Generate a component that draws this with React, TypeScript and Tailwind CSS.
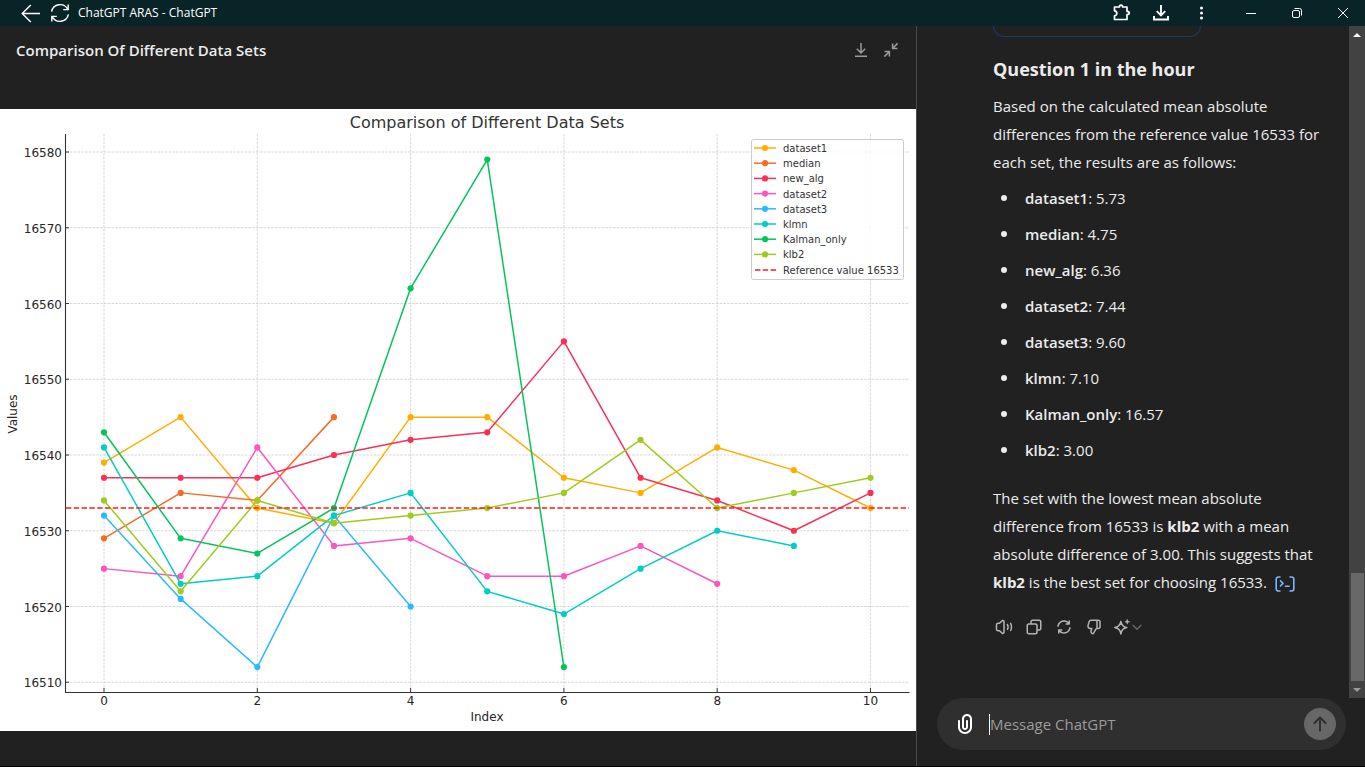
import type { ReactNode } from "react";

type Series = { name: string; color: string; values: number[] };

const SERIES: Series[] = [
  { name: "dataset1", color: "#ffae00", values: [16539, 16545, 16533, 16531, 16545, 16545, 16537, 16535, 16541, 16538, 16533] },
  { name: "median", color: "#fa6a24", values: [16529, 16535, 16534, 16545] },
  { name: "new_alg", color: "#f93056", values: [16537, 16537, 16537, 16540, 16542, 16543, 16555, 16537, 16534, 16530, 16535] },
  { name: "dataset2", color: "#fb55c0", values: [16525, 16524, 16541, 16528, 16529, 16524, 16524, 16528, 16523] },
  { name: "dataset3", color: "#28bbff", values: [16532, 16521, 16512, 16532, 16520] },
  { name: "klmn", color: "#00cec4", values: [16541, 16523, 16524, 16532, 16535, 16522, 16519, 16525, 16530, 16528] },
  { name: "Kalman_only", color: "#04c45c", values: [16543, 16529, 16527, 16533, 16562, 16579, 16512] },
  { name: "klb2", color: "#9fcc1c", values: [16534, 16522, 16534, 16531, 16532, 16533, 16535, 16542, 16533, 16535, 16537] },
];

const RESULTS: [string, string][] = [
  ["dataset1", "5.73"],
  ["median", "4.75"],
  ["new_alg", "6.36"],
  ["dataset2", "7.44"],
  ["dataset3", "9.60"],
  ["klmn", "7.10"],
  ["Kalman_only", "16.57"],
  ["klb2", "3.00"],
];

const X_TICKS = [0, 2, 4, 6, 8, 10];
const Y_TICKS = [16510, 16520, 16530, 16540, 16550, 16560, 16570, 16580];

const px = (i: number) => 104 + i * 76.65;
const py = (v: number) => 43 + (16580 - v) * 7.575;

function Chart() {
  return (
    <svg
      viewBox="0 0 916 622"
      role="img"
      aria-label="Comparison of Different Data Sets"
      className="block w-full bg-white font-['DejaVu_Sans',sans-serif]"
    >
      <g stroke="#b0b0b0" strokeWidth="0.8" strokeDasharray="2.6 1.2" opacity="0.6">
        {X_TICKS.map((t) => (
          <line key={t} x1={px(t)} x2={px(t)} y1="25" y2="583" />
        ))}
        {Y_TICKS.map((t) => (
          <line key={t} x1="66" x2="909" y1={py(t)} y2={py(t)} />
        ))}
      </g>
      <g stroke="#262626" strokeWidth="0.9">
        {X_TICKS.map((t) => (
          <line key={t} x1={px(t)} x2={px(t)} y1="583" y2="579" />
        ))}
        {Y_TICKS.map((t) => (
          <line key={t} x1="66" x2="69" y1={py(t)} y2={py(t)} />
        ))}
      </g>
      {SERIES.map((s) => (
        <g key={s.name} fill={s.color}>
          <polyline
            points={s.values.map((v, i) => `${px(i)},${py(v)}`).join(" ")}
            fill="none"
            stroke={s.color}
            strokeWidth="1.5"
            strokeLinejoin="round"
          />
          {s.values.map((v, i) => (
            <circle key={i} cx={px(i)} cy={py(v)} r="3.1" />
          ))}
        </g>
      ))}
      <line x1="66" x2="909" y1={py(16533)} y2={py(16533)} stroke="#ff1c1c" strokeWidth="1.6" strokeDasharray="5.4 2.4" />
      <path d="M65.5 25V583.5H909.5" fill="none" stroke="#333333" strokeWidth="1.1" />

      <g fill="#262626" fontSize="12">
        {Y_TICKS.map((t) => (
          <text key={t} x="62" y={py(t) + 5} textAnchor="end">
            {t}
          </text>
        ))}
        {X_TICKS.map((t) => (
          <text key={t} x={px(t)} y="596" textAnchor="middle">
            {t}
          </text>
        ))}
        <text x="487" y="612" textAnchor="middle">
          Index
        </text>
        <text transform="translate(17 305) rotate(-90)" textAnchor="middle">
          Values
        </text>
      </g>
      <text x="487" y="19" textAnchor="middle" fontSize="16" fill="#333333">
        Comparison of Different Data Sets
      </text>

      <rect x="751.5" y="30.5" width="152" height="140" rx="2" fill="#ffffff" fillOpacity="0.8" stroke="#cccccc" />
      {SERIES.map((s, i) => (
        <g key={s.name}>
          <line x1="754" x2="776" y1={39 + i * 15.2} y2={39 + i * 15.2} stroke={s.color} strokeWidth="1.5" />
          <circle cx="765" cy={39 + i * 15.2} r="3.1" fill={s.color} />
          <text x="783" y={43 + i * 15.2} fontSize="10" fill="#333333">
            {s.name}
          </text>
        </g>
      ))}
      <line x1="755" x2="776" y1="161" y2="161" stroke="#ff1c1c" strokeWidth="1.6" strokeDasharray="5.4 2.4" />
      <text x="783" y="165" fontSize="10" fill="#333333">
        Reference value 16533
      </text>
    </svg>
  );
}

function IconButton({ label, className, children }: { label: string; className: string; children: ReactNode }) {
  return (
    <button type="button" aria-label={label} className={`flex shrink-0 items-center justify-center ${className}`}>
      {children}
    </button>
  );
}

function TitleBar() {
  return (
    <header className="flex h-[26px] shrink-0 items-center bg-[#092427] text-white">
      <IconButton label="Back" className="ml-4 h-6 w-7">
        <svg width="20" height="20" viewBox="0 0 20 20" fill="none" stroke="currentColor" strokeWidth="1.4">
          <path d="M20 10.5H2.6M10.8 2L2.2 10.5L10.8 19" />
        </svg>
      </IconButton>
      <IconButton label="Reload" className="ml-1 h-6 w-6">
        <svg width="20" height="20" viewBox="0 0 20 20" fill="none" stroke="currentColor" strokeWidth="1.4">
          <path d="M1.6 8.6A8.6 8.6 0 0 1 17.6 6.2M18.2 1.6V6.6H13.2M18.4 11.4A8.6 8.6 0 0 1 2.4 13.8M1.8 18.4V13.4H6.8" />
        </svg>
      </IconButton>
      <h1 className="ml-[6px] flex-1 text-[12px] leading-4">ChatGPT ARAS - ChatGPT</h1>
      <IconButton label="Extensions" className="h-6 w-10">
        <svg width="18" height="18" viewBox="0 0 18 18" fill="none" stroke="currentColor" strokeWidth="1.7" strokeLinejoin="round">
          <path d="M1.5 3H6.4C6.4 0.6 9.6 0.6 9.6 3H14V7.4C17 7.4 17 10.6 14 10.6V15.5H1.5V11.8C4.6 11.4 4.6 7.2 1.5 6.8Z" />
        </svg>
      </IconButton>
      <IconButton label="Downloads" className="h-6 w-10">
        <svg width="18" height="18" viewBox="0 0 18 18" fill="none" stroke="currentColor" strokeWidth="1.9">
          <path d="M8 1V11M3.8 7.2L8 11.4L12.2 7.2M1 12V15.5H15V12" />
        </svg>
      </IconButton>
      <IconButton label="Menu" className="h-6 w-10">
        <svg width="4" height="14" viewBox="0 0 4 14" fill="currentColor">
          <circle cx="1.5" cy="2" r="1.5" />
          <circle cx="1.5" cy="7" r="1.5" />
          <circle cx="1.5" cy="12" r="1.5" />
        </svg>
      </IconButton>
      <IconButton label="Minimize" className="ml-[6px] h-[26px] w-[46px]">
        <svg width="10" height="10" viewBox="0 0 10 10" stroke="currentColor">
          <path d="M0 5.5H10" />
        </svg>
      </IconButton>
      <IconButton label="Restore" className="h-[26px] w-[46px]">
        <svg width="10" height="10" viewBox="0 0 10 10" fill="none" stroke="currentColor">
          <rect x="0.5" y="2.5" width="7" height="7" rx="1.5" />
          <path d="M2.5 0.5H7.5A2 2 0 0 1 9.5 2.5V7.5" />
        </svg>
      </IconButton>
      <IconButton label="Close" className="-mr-px h-[26px] w-[46px]">
        <svg width="10" height="10" viewBox="0 0 10 10" stroke="currentColor">
          <path d="M0 0L10 10M10 0L0 10" />
        </svg>
      </IconButton>
    </header>
  );
}

const SPEAKER =
  "M11 4.9099C11 4.47485 10.4828 4.24734 10.1621 4.54132L6.67572 7.7372C6.49129 7.90626 6.25019 8.00005 6 8.00005H4C3.44772 8.00005 3 8.44776 3 9.00005V15C3 15.5523 3.44772 16 4 16H6C6.25019 16 6.49129 16.0938 6.67572 16.2629L10.1621 19.4588C10.4828 19.7527 11 19.5252 11 19.0902V4.9099ZM8.81069 3.06701C10.4142 1.59714 13 2.73463 13 4.9099V19.0902C13 21.2655 10.4142 22.403 8.81069 20.9331L5.61102 18H4C2.34315 18 1 16.6569 1 15V9.00005C1 7.34319 2.34315 6.00005 4 6.00005H5.61102L8.81069 3.06701ZM20.3166 6.35665C20.8019 6.09313 21.409 6.27296 21.6725 6.75833C22.5191 8.3176 22.9996 10.1042 22.9996 12.0001C22.9996 13.8507 22.5418 15.5974 21.7323 17.1302C21.4744 17.6185 20.8695 17.8054 20.3811 17.5475C19.8927 17.2896 19.7059 16.6846 19.9638 16.1962C20.6249 14.9444 20.9996 13.5175 20.9996 12.0001C20.9996 10.4458 20.6064 8.98627 19.9149 7.71262C19.6514 7.22726 19.8312 6.62017 20.3166 6.35665ZM15.7994 7.90049C16.241 7.5688 16.8679 7.65789 17.1995 8.09947C18.0156 9.18593 18.4996 10.5379 18.4996 12.0001C18.4996 13.3127 18.1094 14.5372 17.4385 15.5604C17.1357 16.0222 16.5158 16.1511 16.0539 15.8483C15.5921 15.5455 15.4632 14.9255 15.766 14.4637C16.2298 13.7564 16.4996 12.9113 16.4996 12.0001C16.4996 10.9859 16.1653 10.0526 15.6004 9.30063C15.2687 8.85905 15.3578 8.23218 15.7994 7.90049Z";
const COPY =
  "M7 5C7 3.34315 8.34315 2 10 2H19C20.6569 2 22 3.34315 22 5V14C22 15.6569 20.6569 17 19 17H17V19C17 20.6569 15.6569 22 14 22H5C3.34315 22 2 20.6569 2 19V10C2 8.34315 3.34315 7 5 7H7V5ZM9 7H14C15.6569 7 17 8.34315 17 10V15H19C19.5523 15 20 14.5523 20 14V5C20 4.44772 19.5523 4 19 4H10C9.44772 4 9 4.44772 9 5V7ZM5 9C4.44772 9 4 9.44772 4 10V19C4 19.5523 4.44772 20 5 20H14C14.5523 20 15 19.5523 15 19V10C15 9.44772 14.5523 9 14 9H5Z";
const REGENERATE =
  "M3.06957 10.8763C3.62331 6.43564 7.40967 3 12 3C14.2824 3 16.4028 3.85067 18.0118 5.25439V4C18.0118 3.44772 18.4595 3 19.0118 3C19.5641 3 20.0118 3.44772 20.0118 4V8C20.0118 8.55228 19.5641 9 19.0118 9H15C14.4477 9 14 8.55228 14 8C14 7.44772 14.4477 7 15 7H16.9571C15.6757 5.76379 13.9101 5 12 5C8.43108 5 5.48466 7.67174 5.0542 11.1237C4.98586 11.6718 4.48619 12.0607 3.93815 11.9923C3.39011 11.924 3.00123 11.4243 3.06957 10.8763ZM20.0618 12.0077C20.6099 12.076 20.9988 12.5757 20.9304 13.1237C20.3767 17.5644 16.5903 21 12 21C9.72322 21 7.60762 20.1535 5.99999 18.7559V20C5.99999 20.5523 5.55228 21 4.99999 21C4.44771 21 3.99999 20.5523 3.99999 20V16C3.99999 15.4477 4.44771 15 4.99999 15H8.99999C9.55228 15 9.99999 15.4477 9.99999 16C9.99999 16.5523 9.55228 17 8.99999 17H7.04285C8.32433 18.2362 10.0899 19 12 19C15.5689 19 18.5153 16.3283 18.9458 12.8763C19.0141 12.3282 19.5138 11.9393 20.0618 12.0077Z";
const THUMB_DOWN =
  "M11.8727 21.4961C11.6725 21.8466 11.2811 22.0423 10.8805 21.9922L10.4267 21.9355C7.95958 21.6271 6.36855 19.1665 7.09975 16.7901L7.65054 15H6.93226C4.29476 15 2.37923 12.4921 3.0732 9.94753L4.43684 4.94753C4.91145 3.20728 6.49209 2 8.29589 2H18.0045C19.6614 2 21.0045 3.34315 21.0045 5V12C21.0045 13.6569 19.6614 15 18.0045 15H16.0045C15.745 15 15.5054 15.1391 15.3766 15.3644L11.8727 21.4961ZM14.0045 4H8.29589C7.39399 4 6.60367 4.60364 6.36637 5.47376L5.00273 10.4738C4.65574 11.746 5.61351 13 6.93226 13H9.00451C9.32185 13 9.62036 13.1506 9.8089 13.4059C9.99743 13.6612 10.0536 13.9908 9.96028 14.2941L9.01131 17.3782C8.6661 18.5002 9.35608 19.6596 10.4726 19.9153L13.6401 14.3721C13.9523 13.8258 14.4376 13.4141 15.0045 13.1902V5C15.0045 4.44772 14.5568 4 14.0045 4ZM17.0045 13V5C17.0045 4.64937 16.9444 4.31278 16.8338 4H18.0045C18.5568 4 19.0045 4.44772 19.0045 5V12C19.0045 12.5523 18.5568 13 18.0045 13H17.0045Z";
const PAPERCLIP =
  "M9 7C9 4.23858 11.2386 2 14 2C16.7614 2 19 4.23858 19 7V15C19 18.866 15.866 22 12 22C8.13401 22 5 18.866 5 15V9C5 8.44772 5.44772 8 6 8C6.55228 8 7 8.44772 7 9V15C7 17.7614 9.23858 20 12 20C14.7614 20 17 17.7614 17 15V7C17 5.34315 15.6569 4 14 4C12.3431 4 11 5.34315 11 7V15C11 15.5523 11.4477 16 12 16C12.5523 16 13 15.5523 13 15V9C13 8.44772 13.4477 8 14 8C14.5523 8 15 8.44772 15 9V15C15 16.6569 13.6569 18 12 18C10.3431 18 9 16.6569 9 15V7Z";

function Glyph({ d, size }: { d: string; size: number }) {
  return (
    <svg width={size} height={size} viewBox="0 0 24 24" fill="currentColor">
      <path fillRule="evenodd" clipRule="evenodd" d={d} />
    </svg>
  );
}

function MessageActions() {
  return (
    <div className="-ml-1 mt-4 flex text-[#b4b4b4]">
      <IconButton label="Read aloud" className="h-[30px] w-[30px]">
        <Glyph d={SPEAKER} size={18} />
      </IconButton>
      <IconButton label="Copy" className="h-[30px] w-[30px]">
        <Glyph d={COPY} size={18} />
      </IconButton>
      <IconButton label="Regenerate" className="h-[30px] w-[30px]">
        <Glyph d={REGENERATE} size={18} />
      </IconButton>
      <IconButton label="Bad response" className="h-[30px] w-[30px]">
        <Glyph d={THUMB_DOWN} size={18} />
      </IconButton>
      <IconButton label="Change model" className="ml-1 h-[30px]">
        <svg width="18" height="18" viewBox="0 0 24 24" fill="none" stroke="currentColor" strokeLinejoin="round">
          <path d="M10.5 4.5C11.2 9.2 13.2 11.8 18.4 12.8C13.2 13.8 11.2 16.4 10.5 21.2C9.8 16.4 7.8 13.8 2.4 12.8C7.8 11.8 9.8 9.2 10.5 4.5Z" strokeWidth="2" />
          <path d="M19 1.8C19.3 3.8 20.1 4.7 22.2 5C20.1 5.3 19.3 6.2 19 8.2C18.7 6.2 17.9 5.3 15.8 5C17.9 4.7 18.7 3.8 19 1.8Z" fill="currentColor" strokeWidth="0.8" />
        </svg>
        <svg width="12" height="12" viewBox="0 0 12 12" fill="none" stroke="#676767" strokeWidth="1.4" strokeLinecap="round" strokeLinejoin="round">
          <path d="M2 4.2L6 8.2L10 4.2" />
        </svg>
      </IconButton>
    </div>
  );
}

function Scrollbar() {
  return (
    <div className="flex w-4 shrink-0 flex-col items-center bg-[#424242]">
      <IconButton label="Scroll up" className="h-[17px] w-4">
        <svg width="8" height="4" viewBox="0 0 8 4" fill="#ffffff">
          <path d="M4 0L8 4H0Z" />
        </svg>
      </IconButton>
      <div className="flex-1" />
      <div className="h-[108px] w-[13px] bg-[#686868]" />
      <IconButton label="Scroll down" className="h-[17px] w-4">
        <svg width="8" height="4" viewBox="0 0 8 4" fill="#9a9a9a">
          <path d="M4 4L8 0H0Z" />
        </svg>
      </IconButton>
    </div>
  );
}

function Conversation() {
  return (
    <div className="flex min-h-0 flex-1">
      <div className="min-w-0 flex-1 overflow-hidden pl-[76px] text-[15px] leading-7">
        <div className="h-[11px] w-[208px] rounded-b-[14px] border border-t-0 border-[#1b3a63]" />
        <h2 className="mt-4 text-[18px] leading-8 font-bold">Question 1 in the hour</h2>
        <p className="mt-[7px] whitespace-nowrap">
          Based on the calculated mean absolute
          <br />
          differences from the reference value 16533 for
          <br />
          each set, the results are as follows:
        </p>
        <ul className="mt-2 flex flex-col gap-2">
          {RESULTS.map(([name, value]) => (
            <li key={name} className="flex items-center">
              <span className="ml-2 h-[6px] w-[6px] rounded-full bg-[#ececec]" />
              <span className="ml-[18px]">
                <strong className="font-semibold">{name}</strong>: {value}
              </span>
            </li>
          ))}
        </ul>
        <p className="mt-5 whitespace-nowrap">
          The set with the lowest mean absolute
          <br />
          difference from 16533 is <strong className="font-bold">klb2</strong> with a mean
          <br />
          absolute difference of 3.00. This suggests that
          <br />
          <strong className="font-bold">klb2</strong> is the best set for choosing 16533.{" "}
          <button type="button" aria-label="View analysis" className="ml-1 inline-flex align-middle text-[#7ab7ff]">
            <svg width="20" height="16" viewBox="0 0 20 16" fill="none" stroke="currentColor" strokeWidth="1.6" strokeLinecap="round" strokeLinejoin="round">
              <path d="M5 1H3.4A2.2 2.2 0 0 0 1.2 3.2V12.8A2.2 2.2 0 0 0 3.4 15H5M15 1H16.6A2.2 2.2 0 0 1 18.8 3.2V12.8A2.2 2.2 0 0 1 16.6 15H15M5.4 4.8L8 7.4L5.4 10M10.4 10.2H14" />
            </svg>
          </button>
        </p>
        <MessageActions />
      </div>
      <Scrollbar />
    </div>
  );
}

function Composer() {
  return (
    <form className="mr-[19px] mb-4 ml-5 flex h-[52px] shrink-0 items-center rounded-full bg-[#2f2f2f] pr-[10px] pl-4" onSubmit={(e) => e.preventDefault()}>
      <IconButton label="Attach file" className="h-6 w-6 text-white">
        <Glyph d={PAPERCLIP} size={24} />
      </IconButton>
      <div className="ml-3 h-[21px] w-px bg-white" />
      <input
        type="text"
        aria-label="Message ChatGPT"
        placeholder="Message ChatGPT"
        className="min-w-0 flex-1 bg-transparent text-[15px] leading-6 outline-none placeholder:text-[#9b9b9b]"
      />
      <IconButton label="Send" className="h-8 w-8 rounded-full bg-[#676767] text-[#2f2f2f]">
        <svg width="32" height="32" viewBox="0 0 32 32" fill="none" stroke="currentColor" strokeWidth="2" strokeLinecap="round" strokeLinejoin="round">
          <path d="M16 22.5V10M10.5 15L16 9.5L21.5 15" />
        </svg>
      </IconButton>
    </form>
  );
}

export default function App() {
  return (
    <div className="flex h-screen flex-col overflow-hidden border-b border-black bg-[#212121] font-['Open_Sans',sans-serif] text-[#ececec]">
      <TitleBar />
      <main className="flex min-h-0 flex-1">
        <section className="flex min-w-0 flex-1 flex-col">
          <div className="flex h-12 shrink-0 items-center pr-[10px] pl-4 text-[#9b9b9b]">
            <h2 className="flex-1 text-[15px] leading-6 font-semibold text-[#ececec]">Comparison Of Different Data Sets</h2>
            <IconButton label="Download chart" className="h-[30px] w-[30px]">
              <svg width="16" height="16" viewBox="0 0 16 16" fill="none" stroke="currentColor" strokeWidth="1.5">
                <path d="M8 1V10.6M3.8 6.8L8 11L12.2 6.8M2 14.3H14" />
              </svg>
            </IconButton>
            <IconButton label="Collapse chart" className="h-[30px] w-[30px]">
              <svg width="16" height="16" viewBox="0 0 16 16" fill="none" stroke="currentColor" strokeWidth="1.5">
                <path d="M14.6 1.4L9.8 6.2M9.6 1.6V6.4H14.4M1.4 14.6L6.2 9.8M1.6 9.6H6.4V14.4" />
              </svg>
            </IconButton>
          </div>
          <div className="flex min-h-0 flex-1 items-center">
            <Chart />
          </div>
        </section>
        <aside className="flex w-[449px] shrink-0 flex-col border-l border-[#4a4a4a]">
          <Conversation />
          <Composer />
        </aside>
      </main>
    </div>
  );
}
